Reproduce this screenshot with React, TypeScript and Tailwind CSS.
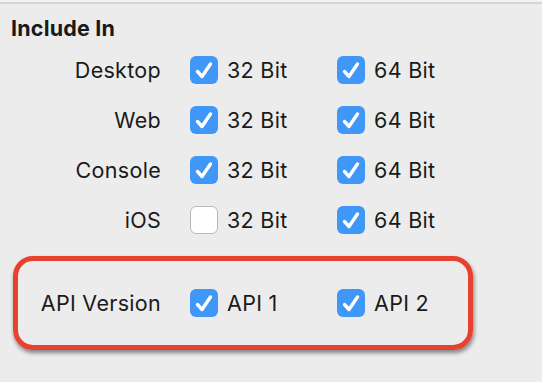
import React from 'react';

type Opt = { label: string; checked: boolean };
type Row = { name: string; opts: [Opt, Opt] };

const rows: Row[] = [
  { name: 'Desktop', opts: [{ label: '32 Bit', checked: true }, { label: '64 Bit', checked: true }] },
  { name: 'Web', opts: [{ label: '32 Bit', checked: true }, { label: '64 Bit', checked: true }] },
  { name: 'Console', opts: [{ label: '32 Bit', checked: true }, { label: '64 Bit', checked: true }] },
  { name: 'iOS', opts: [{ label: '32 Bit', checked: false }, { label: '64 Bit', checked: true }] },
];

function Box({ checked }: { checked: boolean }) {
  if (!checked) {
    return <span className="block w-[28px] h-[28px] rounded-[6px] bg-white border border-[#b9b9b9] shrink-0" />;
  }
  return (
    <span className="flex w-[28px] h-[28px] rounded-[6px] bg-[#3f97f8] shrink-0 items-center justify-center">
      <svg width="28" height="28" viewBox="0 0 28 28">
        <path d="M7.5 15.5 L12 20.5 L20.5 8" fill="none" stroke="white" strokeWidth="3.4" strokeLinecap="round" strokeLinejoin="round" />
      </svg>
    </span>
  );
}

function Check({ opt, width }: { opt: Opt; width: string }) {
  return (
    <div className={`flex items-center gap-[9px] ${width}`}>
      <Box checked={opt.checked} />
      <span>{opt.label}</span>
    </div>
  );
}

export default function App() {
  return (
    <div className="w-[542px] h-[382px] overflow-hidden bg-[#ececec] text-[#1a1a1a] font-['Inter','Liberation_Sans',sans-serif]">
      <div className="h-[2px] bg-[#f2f2f2]" />
      <div className="h-[2px] bg-[#d6d6d6]" />
      <h2 className="pl-[11px] pt-[12px] h-[41px] text-[21.5px] leading-[24px] font-bold tracking-[0.2px]">Include In</h2>

      {rows.map((r) => (
        <div key={r.name} className="flex items-center h-[50px] text-[21.5px] tracking-[0.3px]">
          <div className="w-[161px] text-right">{r.name}</div>
          <div className="flex pl-[29px]">
            <Check opt={r.opts[0]} width="w-[147px]" />
            <Check opt={r.opts[1]} width="" />
          </div>
        </div>
      ))}

      <div className="mt-[11px] ml-[13px] w-[460px] h-[94px] rounded-[20px] border-[5px] border-[#e8412f] shadow-[1px_3px_4px_rgba(0,0,0,0.45)] flex items-center text-[21.5px] tracking-[0.3px]">
        <div className="w-[143px] text-right">API Version</div>
        <div className="flex pl-[29px]">
          <Check opt={{ label: 'API 1', checked: true }} width="w-[147px]" />
          <Check opt={{ label: 'API 2', checked: true }} width="" />
        </div>
      </div>
    </div>
  );
}
